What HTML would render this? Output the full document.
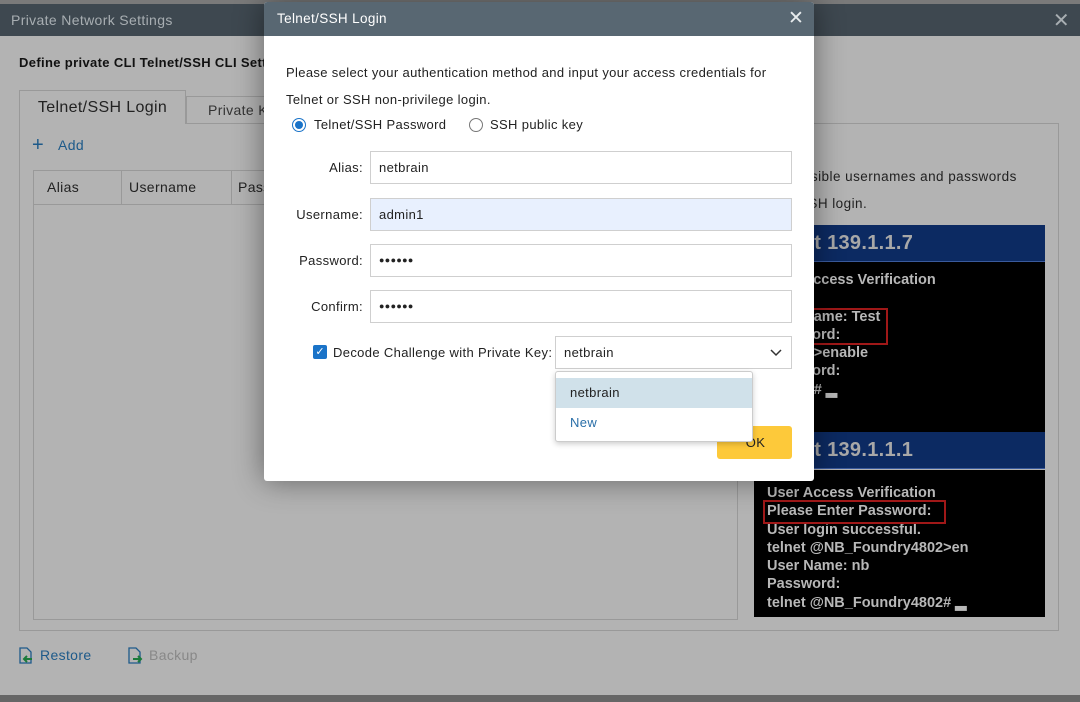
<!DOCTYPE html>
<html><head><style>
*{box-sizing:border-box;margin:0;padding:0}
body{width:1080px;height:702px;overflow:hidden;background:#b3b3b3;font-family:"Liberation Sans",sans-serif;font-size:13px;color:#222;position:relative;letter-spacing:.35px}
.a{position:absolute;white-space:nowrap}
.inp{position:absolute;left:370px;width:422px;height:33px;border:1px solid #cfcfcf;background:#fff;padding:0 8px;line-height:31px;font-size:13px}
.term{position:absolute;left:754px;width:291px;background:#000;color:#b8b8b8;font-weight:bold;font-size:14.5px;line-height:18.3px;padding-left:13px;letter-spacing:0}
.bar{position:absolute;left:754px;width:291px;height:37px;background:#0c2a62;color:#a8a8a8;font-weight:bold;font-size:20px;line-height:37px;border-bottom:1px solid #3a5a9c;letter-spacing:.3px}
</style></head><body>
<div class="a" style="left:0;top:0;width:1080px;height:4px;background:#7a7a7a"></div>
<div class="a" style="left:0;top:4px;width:1080px;height:32px;background:#3e4850;color:#a8aeb2;font-size:14px;line-height:32px;padding-left:11px">Private Network Settings</div>
<div class="a" style="right:10px;top:8px;color:#a8aeb2;font-size:20px">✕</div>
<div class="a" style="left:19px;top:55px;font-weight:bold;color:#111">Define private CLI Telnet/SSH CLI Settings</div>
<div class="a" style="left:19px;top:90px;width:167px;height:34px;border:1px solid #999;border-bottom:none;background:#b3b3b3;font-size:16px;line-height:34px;text-align:center;color:#222">Telnet/SSH Login</div>
<div class="a" style="left:186px;top:96px;width:100px;height:28px;border:1px solid #999;border-bottom:none;font-size:14px;line-height:26px;padding-left:21px;color:#333">Private Key</div>
<div class="a" style="left:19px;top:123px;width:1040px;height:508px;border:1px solid #999;border-top:none"></div>
<div class="a" style="left:186px;top:123px;width:873px;height:1px;background:#999"></div>
<div class="a" style="left:32px;top:134px;color:#1d5a8a;font-size:20px">+</div>
<div class="a" style="left:58px;top:137px;color:#1d5a8a;font-size:14px">Add</div>
<div class="a" style="left:33px;top:170px;width:705px;height:450px;border:1px solid #999"></div>
<div class="a" style="left:33px;top:170px;width:705px;height:35px;border-bottom:1px solid #999;font-size:14px;line-height:34px"><span class="a" style="left:14px">Alias</span><span class="a" style="left:88px;top:0;width:1px;height:34px;background:#999"></span><span class="a" style="left:96px">Username</span><span class="a" style="left:198px;top:0;width:1px;height:34px;background:#999"></span><span class="a" style="left:205px">Password</span></div>
<div class="a" style="left:730px;top:163px;font-size:13.5px;line-height:27px;color:#222;letter-spacing:.45px">Enter all possible usernames and passwords</div>
<div class="a" style="left:756px;top:190px;font-size:13.5px;line-height:27px;color:#222;letter-spacing:.45px">Telnet/SSH login.</div>
<div class="bar" style="top:225px;padding-left:8px">Telnet 139.1.1.7</div>
<div class="term" style="top:262px;height:170px;padding-top:9px">User Access Verification<br><br>User Name: Test<br>Password:<br>Router&gt;enable<br>Password:<br>Router# ▂</div>
<div class="a" style="left:770px;top:308px;width:118px;height:37px;border:2px solid #a01818"></div>
<div class="bar" style="top:432px;padding-left:8px">Telnet 139.1.1.1</div>
<div class="term" style="top:470px;height:147px;padding-top:14px">User Access Verification<br>Please Enter Password:<br>User login successful.<br>telnet @NB_Foundry4802&gt;en<br>User Name: nb<br>Password:<br>telnet @NB_Foundry4802# ▂</div>
<div class="a" style="left:763px;top:500px;width:183px;height:24px;border:2px solid #a01818"></div>
<div class="a" style="left:1058px;top:123px;width:1px;height:500px;background:#999"></div>
<svg class="a" style="left:18px;top:647px" width="16" height="18"><path d="M2 1h7l4 4v11H2z" fill="none" stroke="#1d5a8a" stroke-width="1.3"/><path d="M14 12H7m2-3l-3 3 3 3" stroke="#1a7a3a" stroke-width="2" fill="none"/></svg>
<div class="a" style="left:40px;top:647px;color:#1d5a8a;font-size:14px">Restore</div>
<svg class="a" style="left:127px;top:647px" width="16" height="18"><path d="M2 1h7l4 4v11H2z" fill="none" stroke="#1d5a8a" stroke-width="1.3"/><path d="M6 12h7m-2-3l3 3-3 3" stroke="#1a7a3a" stroke-width="2" fill="none"/></svg>
<div class="a" style="left:149px;top:647px;color:#888;font-size:14px">Backup</div>
<div class="a" style="left:0;top:695px;width:1080px;height:7px;background:#666"></div>
<!-- dialog -->
<div class="a" style="left:264px;top:2px;width:550px;height:479px;background:#fff;border-radius:3px;box-shadow:0 0 30px rgba(0,0,0,.45)"></div>
<div class="a" style="left:264px;top:2px;width:550px;height:34px;background:#586772;color:#fff;font-size:13.5px;line-height:34px;padding-left:13px;border-radius:3px 3px 0 0">Telnet/SSH Login</div>
<div class="a" style="left:788px;top:7px;color:#e8ecee;font-size:19px">✕</div>
<div class="a" style="left:286px;top:59px;line-height:27px">Please select your authentication method and input your access credentials for<br>Telnet or SSH non-privilege login.</div>
<div class="a" style="left:292px;top:118px;width:14px;height:14px;border:1px solid #1a73c8;border-radius:50%"><div style="margin:2px;width:8px;height:8px;background:#1a73c8;border-radius:50%"></div></div>
<div class="a" style="left:314px;top:117px">Telnet/SSH Password</div>
<div class="a" style="left:469px;top:118px;width:14px;height:14px;border:1px solid #777;border-radius:50%"></div>
<div class="a" style="left:490px;top:117px">SSH public key</div>
<div class="a" style="right:717px;top:160px">Alias:</div><div class="inp" style="top:151px">netbrain</div>
<div class="a" style="right:717px;top:207px">Username:</div><div class="inp" style="top:198px;background:#e8f0fe">admin1</div>
<div class="a" style="right:717px;top:253px">Password:</div><div class="inp" style="top:244px;font-size:9px">●●●●●●</div>
<div class="a" style="right:717px;top:299px">Confirm:</div><div class="inp" style="top:290px;font-size:9px">●●●●●●</div>
<div class="a" style="left:313px;top:345px;width:14px;height:14px;background:#1a73c8;border-radius:2px;color:#fff;font-size:11px;line-height:14px;text-align:center;letter-spacing:0">✓</div>
<div class="a" style="left:333px;top:345px">Decode Challenge with Private Key:</div>
<div class="inp" style="left:555px;width:237px;top:336px">netbrain<svg style="position:absolute;right:9px;top:12px" width="12" height="8"><path d="M1 1l5 5 5-5" stroke="#333" stroke-width="1.5" fill="none"/></svg></div>
<div class="a" style="left:717px;top:426px;width:75px;height:33px;background:#fdc93a;border-radius:3px;line-height:33px;text-align:center;padding-left:2px">OK</div>
<div class="a" style="left:555px;top:371px;width:198px;height:71px;background:#fff;border:1px solid #ccc;border-radius:3px;box-shadow:0 2px 6px rgba(0,0,0,.2)"><div style="margin-top:6px;height:30px;background:#d0e1ea;line-height:30px;padding-left:14px">netbrain</div><div style="line-height:30px;padding-left:14px;color:#2a6fa8">New</div></div>
</body></html>
